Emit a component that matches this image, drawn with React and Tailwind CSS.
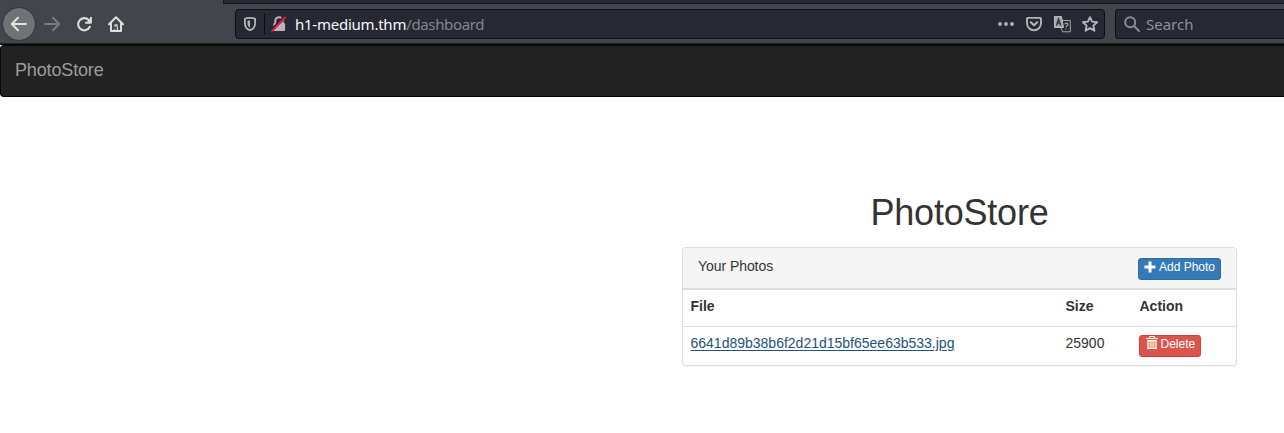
import React from "react";

const icon = "block shrink-0";

function BackIcon() {
  return (
    <svg className={icon} width="18" height="18" viewBox="0 0 18 18" fill="none" stroke="#e4e4e0" strokeWidth="2" strokeLinecap="round" strokeLinejoin="round">
      <path d="M16 9H2.2M8 2.8L1.8 9L8 15.2" />
    </svg>
  );
}

function ForwardIcon() {
  return (
    <svg className={icon} width="18" height="18" viewBox="0 0 18 18" fill="none" stroke="#7b7c7f" strokeWidth="2" strokeLinecap="round" strokeLinejoin="round">
      <path d="M2 9h13.8M10 2.8L16.2 9L10 15.2" />
    </svg>
  );
}

function ReloadIcon() {
  return (
    <svg className={icon} width="18" height="18" viewBox="0 0 18 18" fill="none">
      <path d="M14.2 5.6A6.100 6.100 0 1 0 14.800 11.8" stroke="#dededb" strokeWidth="2.1" strokeLinecap="round" />
      <path d="M15.900 2.800v5h-5" stroke="#dededb" strokeWidth="2" strokeLinecap="round" strokeLinejoin="round" />
      <path d="M15.500 3.500v4h-4z" fill="#dededb" />
    </svg>
  );
}

function HomeIcon() {
  return (
    <svg className={icon} width="18" height="18" viewBox="0 0 18 18" fill="none" stroke="#dededb" strokeWidth="2" strokeLinecap="round" strokeLinejoin="round">
      <path d="M2 9.200L9 2.200L16 9.200M4 8.500v7.500h10V8.500" />
      <path d="M8 11.500v-1.600h2v1.600M7.600 16v-1.500M10.400 16v-3.500" strokeWidth="1.200" />
    </svg>
  );
}

function ShieldIcon() {
  return (
    <svg className={icon} width="14" height="16" viewBox="0 0 14 16">
      <path d="M7 1.9C5 1.9 3.2 2.1 1.9 2.8v4.4c0 3.5 1.9 6 5.1 7c3.2-1 5.1-3.500 5.100-7V2.800C10.800 2.100 9 1.900 7 1.900z" fill="none" stroke="#b5b5b8" strokeWidth="1.8" strokeLinejoin="round" />
      <path d="M7 4.400c-1 0-1.800.1-2.500.4v2.700c0 2 .9 3.500 2.500 4.300z" fill="#b5b5b8" />
    </svg>
  );
}

function InsecureIcon() {
  return (
    <svg className={icon} width="16" height="16" viewBox="0 0 16 16">
      <path d="M4.300 7.500V4.900a3.700 3.700 0 0 1 7.400 0v2.600" fill="none" stroke="#b5b5b8" strokeWidth="2" />
      <rect x="2.300" y="7" width="11.800" height="8" rx="1" fill="#b5b5b8" />
      <path d="M.7 14.200L13.300 1.100" stroke="#262833" strokeWidth="3.200" />
      <path d="M1.200 14.900L14 1.500" stroke="#f3154c" strokeWidth="2" strokeLinecap="round" />
    </svg>
  );
}

function PocketIcon() {
  return (
    <svg className={icon} width="16" height="16" viewBox="0 0 16 16" fill="none" stroke="#b5b5b8" strokeWidth="1.9" strokeLinecap="round" strokeLinejoin="round">
      <path d="M1.900 1.900h12.200c.5 0 .9.400.9.900V7.300a7 7 0 0 1-14 0V2.800c0-.5.400-.9.900-.9z" />
      <path d="M4.800 6.300L8 9.300l3.200-3" strokeWidth="2.200" />
    </svg>
  );
}

function TranslateIcon() {
  return (
    <svg className={icon} width="17" height="17" viewBox="0 0 17 17" fill="none">
      <path d="M.5.500h7l2 11h-9z" fill="#a7a7ab" stroke="#bcbcbf" />
      <path d="M2.500 9.500L4.500 3l2.200 6.500M3.200 7h2.700" stroke="#343640" strokeWidth="1.400" />
      <path d="M8.500 4.500h7.800v11.300H8.800l-2-3.800" stroke="#a7a7ab" />
      <path d="M10.800 8.300c.4-1.900 3.600-1.500 3 .4c-.3 1-1.800 1.100-1.800 2.500M12 12.400v1" stroke="#a7a7ab" strokeWidth="1.200" />
    </svg>
  );
}

function StarIcon() {
  return (
    <svg className={icon} width="16" height="16" viewBox="0 0 16 16" fill="none" stroke="#b5b5b8" strokeWidth="1.900" strokeLinejoin="round">
      <path d="M8 1.200l2.100 4.400 5 .6-3.700 3.400 1 5.100L8 12.200l-4.400 2.500 1-5.100L.9 6.200l5-.6z" />
    </svg>
  );
}

function SearchIcon() {
  return (
    <svg className={icon} width="16" height="16" viewBox="0 0 16 16" fill="none" stroke="#8b8c90" strokeWidth="2" strokeLinecap="round">
      <circle cx="6.200" cy="6.200" r="5" />
      <path d="M10 10l5 5" />
    </svg>
  );
}

function PlusIcon() {
  return (
    <svg className={icon} width="12" height="12" viewBox="0 0 12 12" fill="#fff">
      <path d="M4.500.5h3v4h4v3h-4v4h-3v-4h-4v-3h4z" />
    </svg>
  );
}

function TrashIcon() {
  return (
    <svg className={icon} width="12" height="14" viewBox="0 0 12 14" fill="none">
      <path d="M3.500 2V.5h5V2" stroke="#fff" />
      <path d="M.3 2.500h11.400" stroke="#fff" />
      <path d="M1 4h10v9H1z" fill="#f9cbb0" />
      <path d="M1 4.500h10M1 12.500h10" stroke="#fff" />
      <path d="M3.500 5.500v6M6 5.500v6M8.500 5.500v6" stroke="#f0a080" />
    </svg>
  );
}

function BrowserToolbar() {
  return (
    <header className="h-[45px] border-b border-[#090a0c] bg-[#42454c] shadow-[inset_0_-1px_0_#1d1f22]">
      <div className="ml-[223px] h-1 border-b border-l border-[#15171d] bg-[#262934]" />
      <div className="flex h-10 items-center">
        <div className="flex w-[235px] shrink-0 items-center">
          <button className="ml-[3px] flex h-8 w-8 items-center justify-center rounded-full bg-[#717275] outline outline-1 outline-[#35363a]">
            <BackIcon />
          </button>
          <span className="ml-2"><ForwardIcon /></span>
          <span className="ml-[14px]"><ReloadIcon /></span>
          <span className="ml-[14px]"><HomeIcon /></span>
        </div>
        <div className="flex h-[30px] w-[870px] shrink-0 items-center rounded border border-[#0d0e13] bg-[#262833]">
          <span className="ml-[7px]"><ShieldIcon /></span>
          <span className="ml-[7px] h-[22px] w-px bg-[#0d0e13]" />
          <span className="ml-[6px]"><InsecureIcon /></span>
          <span className="ml-2 whitespace-nowrap font-['Noto_Sans',sans-serif] text-[15px] leading-5 tracking-[-0.36px] text-[#85868c]">
            <span className="tracking-[-0.24px] text-[#f9f9fa]">h1-medium.thm</span>/dashboard
          </span>
          <div className="ml-auto mr-[6px] flex items-center">
            <svg className={icon} width="16" height="16" viewBox="0 0 16 16" fill="#b5b5b8">
              <circle cx="2" cy="8" r="1.900" />
              <circle cx="8" cy="8" r="1.900" />
              <circle cx="14" cy="8" r="1.900" />
            </svg>
            <span className="ml-3"><PocketIcon /></span>
            <span className="ml-3"><TranslateIcon /></span>
            <span className="ml-[11px]"><StarIcon /></span>
          </div>
        </div>
        <div className="ml-[10px] flex h-[30px] flex-1 items-center rounded-l border border-r-0 border-[#0d0e13] bg-[#262833]">
          <span className="ml-2"><SearchIcon /></span>
          <span className="ml-[6px] font-['Noto_Sans',sans-serif] text-[15px] leading-5 text-[#919297]">Search</span>
        </div>
      </div>
    </header>
  );
}

export default function App() {
  return (
    <div className="h-[433px] w-[1284px] overflow-hidden bg-white font-['Liberation_Sans',Arial,sans-serif] text-sm text-[#333]">
      <BrowserToolbar />
      <nav className="h-[52px] rounded-l border border-r-0 border-[#080808] bg-[#222] px-[14px] pt-[14px] text-lg leading-5 tracking-[-0.15px] text-[#9d9d9d]">
        PhotoStore
      </nav>
      <main className="ml-[682px] w-[555px] pt-[96px]">
        <h1 className="mb-[15px] text-center text-[36px] leading-[39px] tracking-[-0.22px]">PhotoStore</h1>
        <section className="h-[119px] overflow-hidden rounded border border-[#ddd] bg-white shadow-[0_1px_1px_rgba(0,0,0,0.05)]">
          <div className="flex h-[42px] items-start justify-between border-b-2 border-[#ddd] bg-[#f5f5f5] pl-[15px] pr-[15px] pt-[10px]">
            <span className="mt-[-2px] leading-5 tracking-[-0.06px]">Your Photos</span>
            <button className="flex h-[22px] w-[83px] items-start rounded-[3px] border border-[#2e6da4] bg-[#337ab7] pl-[5px] text-xs leading-[17px] text-white">
              <span className="mt-[2px]"><PlusIcon /></span>
              <span className="ml-[3px] whitespace-nowrap">Add Photo</span>
            </button>
          </div>
          <div className="grid h-[37px] grid-cols-[375px_74px_1fr] border-b border-[#ddd] pl-[7.500px] pt-[6px] font-bold leading-5">
            <span>File</span>
            <span>Size</span>
            <span>Action</span>
          </div>
          <div className="grid grid-cols-[375px_73px_1fr] items-start pl-[7.500px] pt-2 leading-5">
            <a className="mt-[-2px] text-[#23527c] underline underline-offset-2" href="#photo">6641d89b38b6f2d21d15bf65ee63b533.jpg</a>
            <span className="mt-[-2px]">25900</span>
            <button className="flex h-[22px] w-[62px] items-start rounded-[3px] border border-[#d43f3a] bg-[#d9534f] pl-[6px] text-xs leading-[17px] text-white">
              <TrashIcon />
              <span className="ml-[3px]">Delete</span>
            </button>
          </div>
        </section>
      </main>
    </div>
  );
}
